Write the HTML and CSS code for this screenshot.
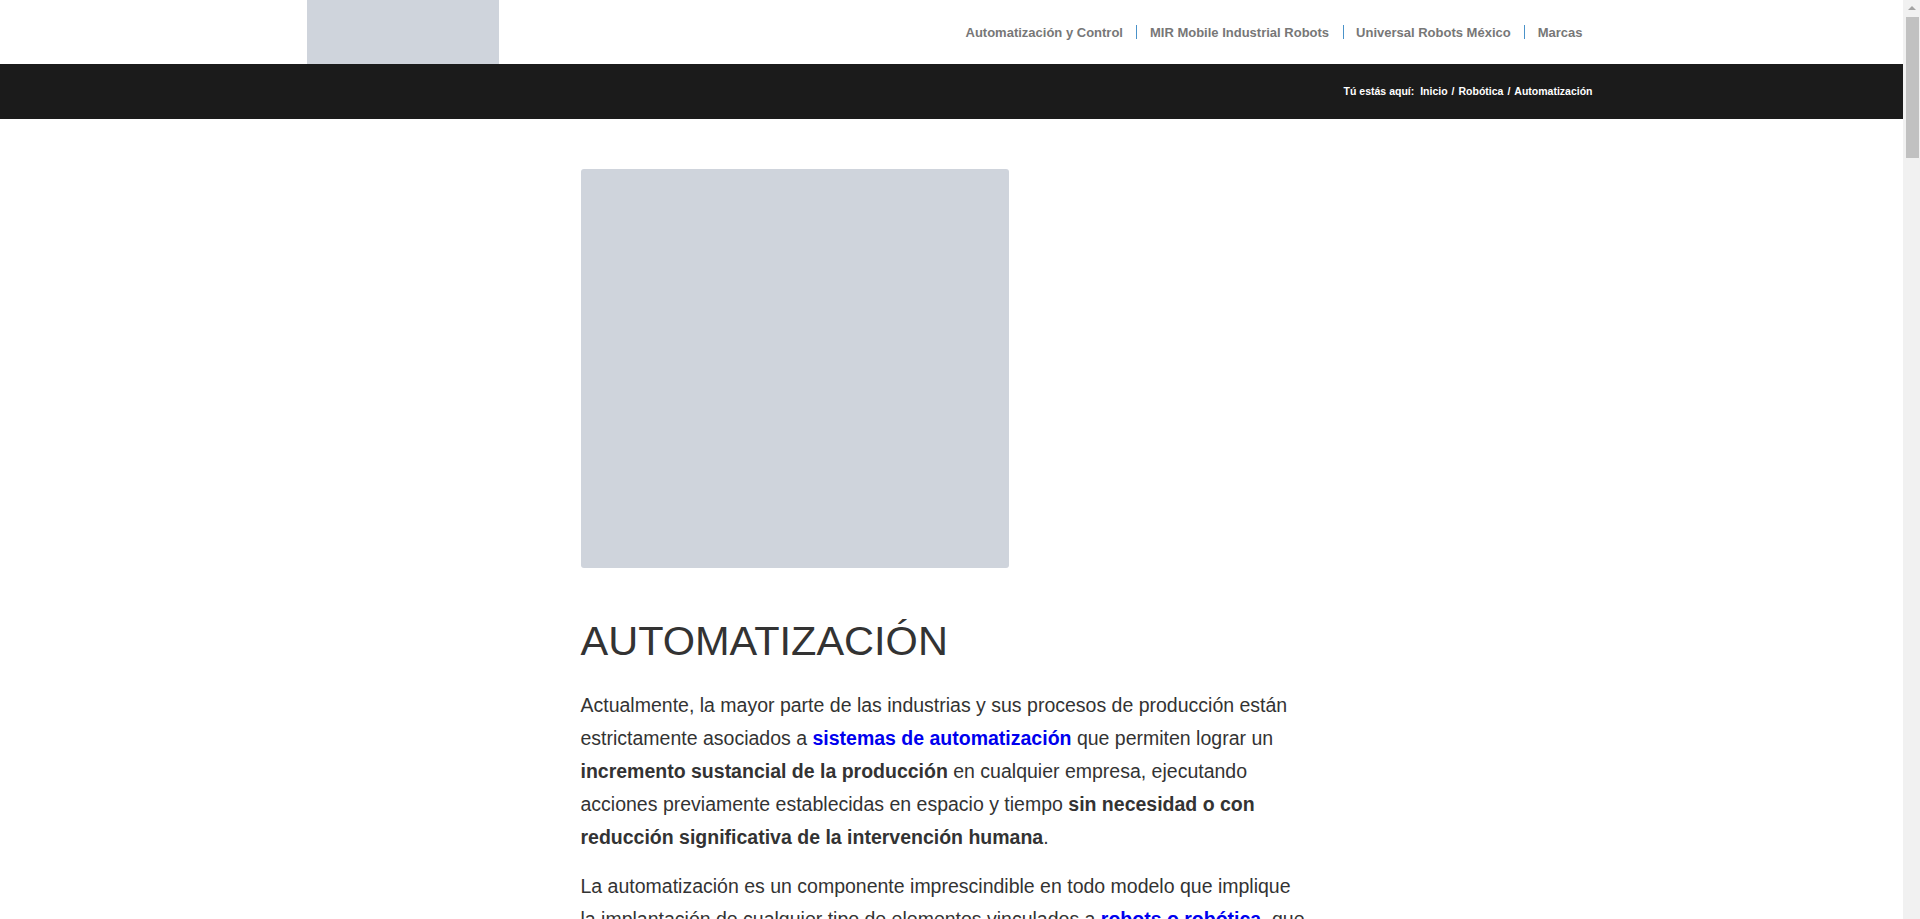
FILE: index.html
```html
<!DOCTYPE html>
<html lang="es">
<head>
<meta charset="utf-8">
<title>Automatización</title>
<link rel="stylesheet" href="styles.css">
</head>
<body>
<div class="page">
  <header class="site-header">
    <div class="container header-inner">
      <div class="logo"></div>
      <nav class="main-nav">
        <ul>
          <li><a href="#">Automatización y Control</a></li>
          <li><a href="#">MIR Mobile Industrial Robots</a></li>
          <li><a href="#">Universal Robots México</a></li>
          <li><a href="#">Marcas</a></li>
        </ul>
      </nav>
    </div>
  </header>
  <div class="title-bar">
    <div class="container title-inner">
      <div class="breadcrumb">
        <span class="bc-label">Tú estás aquí:</span>
        <a href="#">Inicio</a><span class="sep">/</span><a href="#">Robótica</a><span class="sep">/</span><span class="current">Automatización</span>
      </div>
    </div>
  </div>
  <main class="content">
    <article class="entry">
      <div class="featured"></div>
      <h1 class="entry-title">AUTOMATIZACIÓN</h1>
      <p>Actualmente, la mayor parte de las industrias y sus procesos de producción están estrictamente asociados a <a href="#">sistemas de automatización</a> que permiten lograr un <strong>incremento sustancial de la producción</strong> en cualquier empresa, ejecutando acciones previamente establecidas en espacio y tiempo <strong>sin necesidad o con reducción significativa de la intervención humana</strong>.</p>
      <p>La automatización es un componente imprescindible en todo modelo que implique la implantación de cualquier tipo de elementos vinculados a <a href="#">robots o robótica</a>, que permitan realizar tareas de forma autónoma, segura y eficiente, optimizando los recursos disponibles y elevando la calidad de los productos finales.</p>
      <p>Gracias a la automatización, las empresas pueden reducir costos operativos, minimizar errores y aumentar su competitividad en mercados cada vez más exigentes.</p>
    </article>
  </main>
</div>
<div class="scrollbar" aria-hidden="true">
  <div class="sb-arrow"></div>
  <div class="sb-thumb"></div>
</div>
</body>
</html>
```
FILE: styles.css
```css
html,
body {
  height: 100%;
}
body {
  margin: 0;
  background: #ffffff;
  font-family: "Liberation Sans", Arial, sans-serif;
  color: #333333;
  display: flex;
  overflow: hidden;
}
.page {
  flex: 1;
  min-width: 0;
  height: 100%;
  overflow: hidden;
}
.scrollbar {
  width: 17px;
  flex: 0 0 17px;
  height: 100%;
  background: #f1f1f1;
  display: flex;
  flex-direction: column;
  align-items: center;
}
.sb-arrow {
  width: 0;
  height: 0;
  margin-top: 6px;
  border-left: 4px solid transparent;
  border-right: 4px solid transparent;
  border-bottom: 4px solid #a3a3a3;
}
.sb-thumb {
  width: 13px;
  height: 141px;
  margin-top: 7px;
  margin-left: 1px;
  background: #c1c1c1;
}
.container {
  width: 1290px;
  margin: 0 auto;
}
.site-header {
  height: 64px;
  background: #ffffff;
}
.header-inner {
  display: flex;
  justify-content: space-between;
  align-items: center;
  height: 64px;
}
.logo {
  width: 192px;
  height: 64px;
  background: #cfd4dc;
}
.main-nav ul {
  list-style: none;
  margin: 0;
  padding: 0 0.5px 0 0;
  display: flex;
  align-items: center;
}
.main-nav li {
  position: relative;
  padding: 0 13.5px;
  display: flex;
  align-items: center;
}
.main-nav li + li::before {
  content: "";
  position: absolute;
  left: 0;
  top: 50%;
  width: 1px;
  height: 14px;
  margin-top: -7px;
  background: #4a92c9;
}
.main-nav a {
  font-family: "Liberation Sans", Arial, sans-serif;
  font-weight: bold;
  font-size: 13px;
  color: #777777;
  text-decoration: none;
}
.title-bar {
  background: #1b1b1b;
  height: 55px;
}
.title-inner {
  display: flex;
  justify-content: flex-end;
  align-items: center;
  height: 55px;
}
.breadcrumb {
  font-family: "Liberation Sans", Arial, sans-serif;
  font-weight: bold;
  font-size: 10.5px;
  color: #ffffff;
  padding-right: 4px;
  padding-bottom: 1px;
}
.breadcrumb a,
.breadcrumb .current {
  color: #ffffff;
  text-decoration: none;
}
.breadcrumb .bc-label {
  margin-right: 3px;
}
.breadcrumb .sep {
  margin: 0 4px;
}
.content {
  padding-top: 50px;
}
.entry {
  width: 743px;
  margin: 0 auto;
  padding-left: 1px;
}
.featured {
  width: 428px;
  height: 399px;
  background: #cfd4dc;
  border-radius: 3px;
}
.entry-title {
  font-size: 41.5px;
  font-weight: normal;
  line-height: 48px;
  margin: 49px 0 24px;
  color: #333333;
}
.entry p {
  max-width: 728px;
  font-size: 19.5px;
  line-height: 33px;
  margin: 0 0 16px;
  color: #333333;
}
.entry a {
  color: #0000ee;
  font-weight: bold;
  text-decoration: none;
}
.entry strong {
  font-weight: bold;
}
```
